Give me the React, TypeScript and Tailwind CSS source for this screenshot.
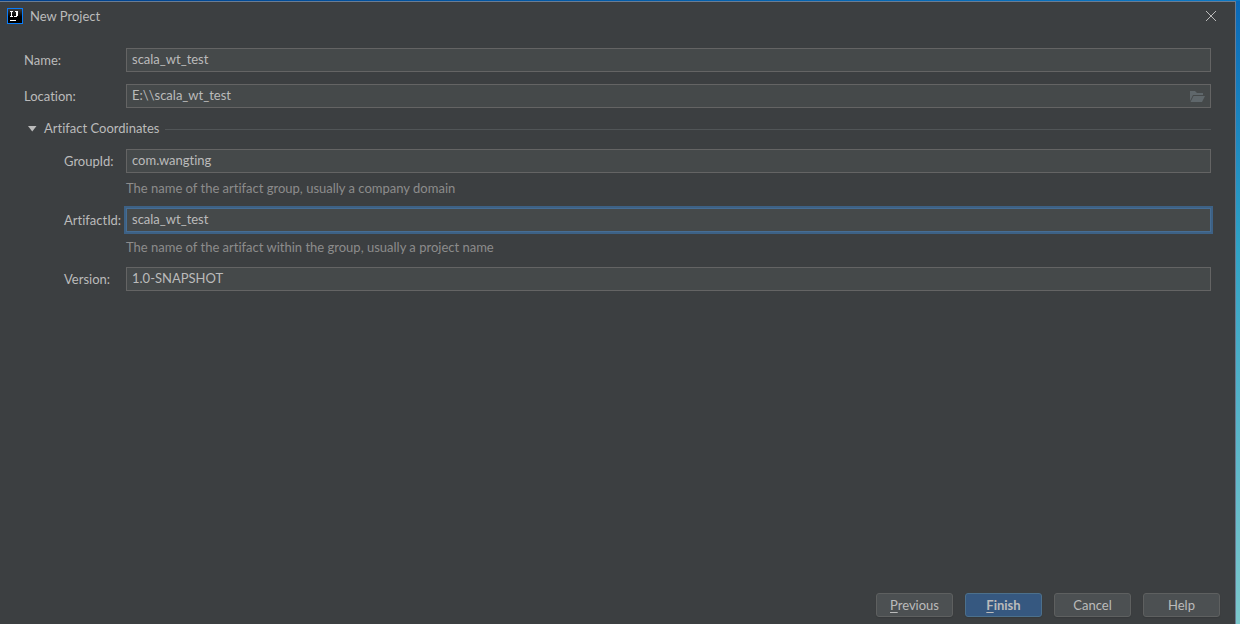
import { useState } from "react";
import type { InputHTMLAttributes, ReactNode } from "react";

const HINTS = {
  groupId: "The name of the artifact group, usually a company domain",
  artifactId: "The name of the artifact within the group, usually a project name",
};

const INPUT =
  "block h-6 w-full min-w-0 border border-[#646464] bg-[#45494a] px-[5px] pb-0.5 text-[#bbbbbb] outline-none focus:border-[#466d94] focus:ring-2 focus:ring-[#3d6185]";

function TextField({ label, nested, hint, children, ...input }: {
  label: string;
  nested?: boolean;
  hint?: string;
  children?: ReactNode;
} & InputHTMLAttributes<HTMLInputElement>) {
  return (
    <div className={`grid ${nested ? "grid-cols-[62px_minmax(0,1fr)]" : "grid-cols-[102px_minmax(0,1fr)]"}`}>
      <label htmlFor={input.id} className="leading-6 whitespace-nowrap">{label}</label>
      <div className="relative">
        <input type="text" spellCheck={false} autoComplete="off" className={INPUT} {...input} />
        {children}
      </div>
      {hint && <p className="col-start-2 mb-[5px] leading-[30px] text-[#8c8c8c]">{hint}</p>}
    </div>
  );
}

function IdeaLogo() {
  return (
    <svg width="16" height="16" viewBox="0 0 16 16" shapeRendering="crispEdges" aria-hidden="true">
      <defs>
        <linearGradient id="logo-bg" x1="0" y1="0" x2="0" y2="1">
          <stop offset="0" stopColor="#3d3d3d" />
          <stop offset="0.55" stopColor="#000" />
        </linearGradient>
      </defs>
      <rect width="16" height="16" fill="#087cfa" />
      <rect x="1" y="1" width="14" height="14" fill="url(#logo-bg)" />
      <path d="M3 3h3v1H5v4h1v1H3V8h1V4H3zM8 3h3v5h-1v1H7V8h2V4H8z" fill="#fff" />
      <path d="M3 12h6v1H3z" fill="#fff" />
    </svg>
  );
}

function FolderIcon() {
  return (
    <svg width="16" height="12" viewBox="0 0 16 12" fill="#5f676b" aria-hidden="true">
      <path d="M0 0h5l2 2h6v2H3L0 10z" />
      <path d="M3.5 5H15l-3 6H.5z" />
    </svg>
  );
}

const BUTTON = "h-6 w-[77px] rounded-[3px] border text-center leading-[22px] shadow-[0_1px_1px_#36393b]";

function DialogButton({ primary, children }: { primary?: boolean; children: ReactNode }) {
  return (
    <button
      type={primary ? "submit" : "button"}
      className={`${BUTTON} ${primary ? "border-[#4c708c] bg-[#365880] font-bold" : "border-[#5e6060] bg-[#4c5052]"}`}
    >
      {children}
    </button>
  );
}

export default function App() {
  const [open, setOpen] = useState(true);

  return (
    <div className="flex min-h-screen flex-col bg-linear-to-b from-[#0a68b8] via-[#2fa3c6] via-40% to-[#7cc8cc] font-['Lato','Noto_Sans',sans-serif] text-[13px] text-[#bbbbbb] [font-variant-ligatures:none]">
      {/* Desktop edge above the window */}
      <div className="h-px bg-linear-to-r from-[#003f8c] to-[#0b78c4]" />
      <main className="mr-1 flex flex-1 flex-col border-t border-r border-[#6b7c92] bg-[#3c3f41]">
        <header className="flex h-7 items-center pr-[18px] pl-[7px]">
          <IdeaLogo />
          <h1 className="ml-[7px] flex-1 leading-7">New Project</h1>
          <button type="button" aria-label="Close">
            <svg width="12" height="12" viewBox="0 0 12 12" stroke="#bbbbbb" fill="none" aria-hidden="true">
              <path d="M1 1l10 10M11 1L1 11" />
            </svg>
          </button>
        </header>

        <form className="flex flex-1 flex-col" onSubmit={(e) => e.preventDefault()}>
          <div className="flex-1 px-6 pt-[18px]">
            <div className="space-y-3">
              <TextField id="name" label="Name:" defaultValue="scala_wt_test" />
              <TextField id="location" label="Location:" defaultValue="E:\\scala_wt_test">
                <button type="button" aria-label="Browse" className="absolute top-[7px] right-[5px]">
                  <FolderIcon />
                </button>
              </TextField>
            </div>

            {/* Collapsible section header */}
            <div className="mt-2.5 mb-[9px] flex h-[22px] items-center">
              <button type="button" aria-expanded={open} onClick={() => setOpen(!open)} className="flex items-center pl-1">
                <svg width="9" height="6" viewBox="0 0 9 6" fill="#bbbbbb" className={open ? "" : "-rotate-90"} aria-hidden="true">
                  <path d="M0 0h8.5L4.25 5.5z" />
                </svg>
                <span className="ml-[7px]">Artifact Coordinates</span>
              </button>
              <span className="ml-1.5 h-px flex-1 bg-[#515557]" />
            </div>

            {open && (
              <div className="pl-10">
                <TextField nested id="groupId" label="GroupId:" defaultValue="com.wangting" hint={HINTS.groupId} />
                <TextField nested autoFocus id="artifactId" label="ArtifactId:" defaultValue="scala_wt_test" hint={HINTS.artifactId} />
                <TextField nested id="version" label="Version:" defaultValue="1.0-SNAPSHOT" />
              </div>
            )}
          </div>

          <footer className="flex justify-end gap-3 pr-[15px] pb-[7px]">
            <DialogButton><u className="underline-offset-2">P</u>revious</DialogButton>
            <DialogButton primary><u className="underline-offset-2">F</u>inish</DialogButton>
            <DialogButton>Cancel</DialogButton>
            <DialogButton>Help</DialogButton>
          </footer>
        </form>
      </main>
    </div>
  );
}
